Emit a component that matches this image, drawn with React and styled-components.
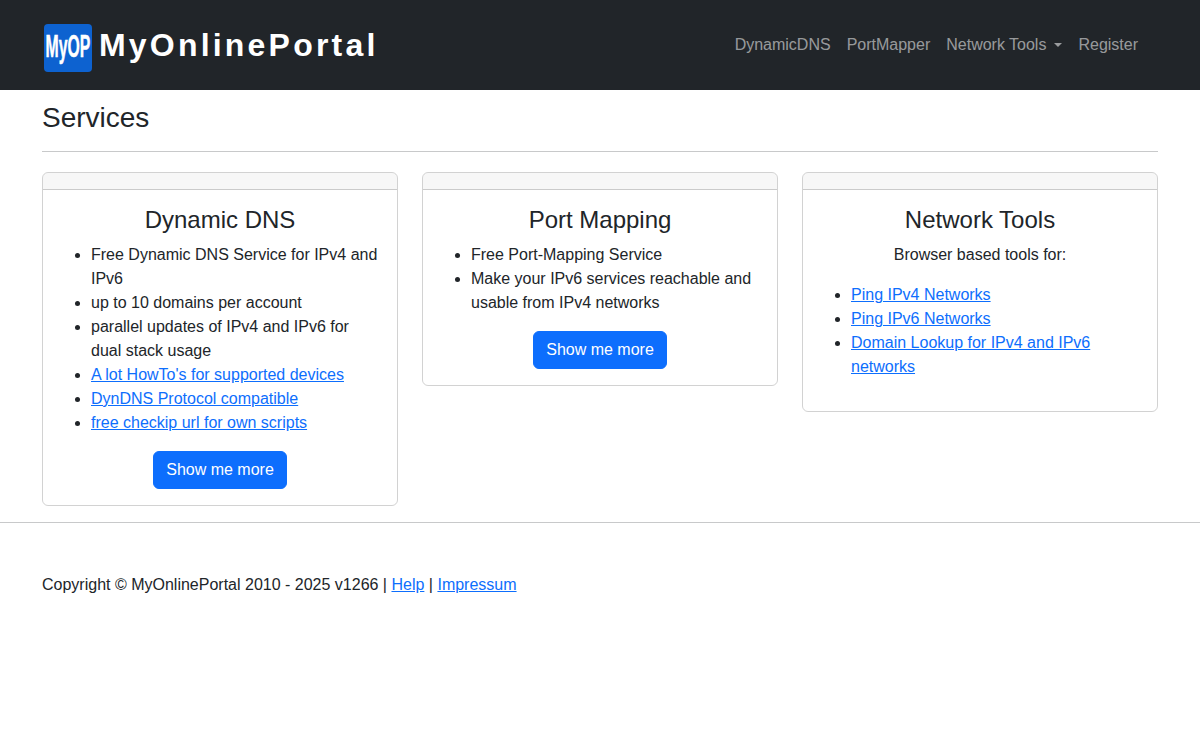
import React from "react";
import styled, { createGlobalStyle } from "styled-components";

const Global = createGlobalStyle`
  html, body { margin: 0; padding: 0; background: #fff; }
  body {
    font-family: "Liberation Sans", Arial, sans-serif;
    font-size: 16px;
    line-height: 1.5;
    color: #212529;
  }
  * { box-sizing: border-box; }
`;

const Navbar = styled.nav`
  height: 90px;
  background: #212529;
  display: flex;
  align-items: center;
  justify-content: space-between;
  padding: 0 54px 0 44px;
`;

const Brand = styled.a`
  display: flex;
  align-items: center;
  gap: 7px;
  color: #fff;
  text-decoration: none;
`;

const LogoBox = styled.span`
  width: 48px;
  height: 48px;
  margin-top: 6px;
  border-radius: 4px;
  background: #0d62d0;
  display: flex;
  align-items: center;
  justify-content: center;
  overflow: hidden;
`;

const LogoText = styled.span`
  font-family: "Liberation Sans", Arial, sans-serif;
  font-weight: 700;
  font-size: 31px;
  line-height: 1;
  color: #fff;
  white-space: nowrap;
  -webkit-text-stroke: 0.5px #fff;
  transform: translateY(-2px) scaleX(0.51);
`;

const BrandName = styled.span`
  font-size: 32px;
  font-weight: 700;
  line-height: 1;
  letter-spacing: 3.2px;
  white-space: nowrap;
`;

const NavList = styled.div`
  display: flex;
  align-items: center;
`;

const NavLink = styled.a`
  padding: 8px;
  color: rgba(255, 255, 255, 0.55);
  text-decoration: none;
  white-space: nowrap;
`;

const Caret = styled.span`
  display: inline-block;
  margin-left: 8px;
  vertical-align: 3px;
  border-top: 4.8px solid;
  border-right: 4.8px solid transparent;
  border-left: 4.8px solid transparent;
`;

const Container = styled.main`
  width: 1140px;
  margin: 0 auto;
  padding: 11px 12px 0;
`;

const PageTitle = styled.h3`
  margin: 0;
  font-size: 28px;
  font-weight: 500;
  line-height: 1.2;
`;

const Rule = styled.hr`
  margin: 16px 0 20.4px;
  border: 0;
  border-top: 1px solid #c8c9ca;
`;

const CardGrid = styled.div`
  display: grid;
  grid-template-columns: repeat(3, 356px);
  column-gap: 24px;
  align-items: start;
`;

const Card = styled.section`
  border: 1px solid rgba(0, 0, 0, 0.176);
  border-radius: 6px;
  overflow: hidden;
`;

const CardHeader = styled.div`
  height: 17px;
  background: rgba(0, 0, 0, 0.03);
  border-bottom: 1px solid rgba(0, 0, 0, 0.176);
`;

const CardBody = styled.div`
  padding: 16px;
`;

const CardTitle = styled.h4`
  margin: 0 0 8px;
  font-size: 24px;
  font-weight: 500;
  line-height: 1.2;
  text-align: center;
`;

const List = styled.ul`
  margin: 0 0 16px;
  padding-left: 32px;
  text-align: left;
`;

const Intro = styled.p`
  margin: 0 0 16px;
  text-align: center;
`;

const TextLink = styled.a`
  color: #0d6efd;
  text-decoration: underline;
`;

const ButtonRow = styled.div`
  display: flex;
  justify-content: center;
`;

const Button = styled.button`
  height: 38px;
  padding: 6px 12px;
  font: inherit;
  color: #fff;
  background: #0d6efd;
  border: 1px solid #0d6efd;
  border-radius: 6px;
`;

const FooterRule = styled.hr`
  margin: 16px 0 0;
  border: 0;
  border-top: 1px solid #c8c9ca;
`;

const Footer = styled.footer`
  width: 1140px;
  margin: 0 auto;
  padding: 50px 12px 0;
`;

export default function App() {
  return (
    <>
      <Global />
      <Navbar>
        <Brand href="#">
          <LogoBox>
            <LogoText>MyOP</LogoText>
          </LogoBox>
          <BrandName>MyOnlinePortal</BrandName>
        </Brand>
        <NavList>
          <NavLink href="#">DynamicDNS</NavLink>
          <NavLink href="#">PortMapper</NavLink>
          <NavLink href="#">
            Network Tools
            <Caret />
          </NavLink>
          <NavLink href="#">Register</NavLink>
        </NavList>
      </Navbar>
      <Container>
        <PageTitle>Services</PageTitle>
        <Rule />
        <CardGrid>
          <Card>
            <CardHeader />
            <CardBody>
              <CardTitle>Dynamic DNS</CardTitle>
              <List>
                <li>Free Dynamic DNS Service for IPv4 and IPv6</li>
                <li>up to 10 domains per account</li>
                <li>parallel updates of IPv4 and IPv6 for dual stack usage</li>
                <li>
                  <TextLink href="#">A lot HowTo's for supported devices</TextLink>
                </li>
                <li>
                  <TextLink href="#">DynDNS Protocol compatible</TextLink>
                </li>
                <li>
                  <TextLink href="#">free checkip url for own scripts</TextLink>
                </li>
              </List>
              <ButtonRow>
                <Button>Show me more</Button>
              </ButtonRow>
            </CardBody>
          </Card>
          <Card>
            <CardHeader />
            <CardBody>
              <CardTitle>Port Mapping</CardTitle>
              <List>
                <li>Free Port-Mapping Service</li>
                <li>Make your IPv6 services reachable and usable from IPv4 networks</li>
              </List>
              <ButtonRow>
                <Button>Show me more</Button>
              </ButtonRow>
            </CardBody>
          </Card>
          <Card>
            <CardHeader />
            <CardBody>
              <CardTitle>Network Tools</CardTitle>
              <Intro>Browser based tools for:</Intro>
              <List>
                <li>
                  <TextLink href="#">Ping IPv4 Networks</TextLink>
                </li>
                <li>
                  <TextLink href="#">Ping IPv6 Networks</TextLink>
                </li>
                <li>
                  <TextLink href="#">Domain Lookup for IPv4 and IPv6 networks</TextLink>
                </li>
              </List>
            </CardBody>
          </Card>
        </CardGrid>
      </Container>
      <FooterRule />
      <Footer>
        Copyright © MyOnlinePortal 2010 - 2025 v1266 | <TextLink href="#">Help</TextLink> |{" "}
        <TextLink href="#">Impressum</TextLink>
      </Footer>
    </>
  );
}
